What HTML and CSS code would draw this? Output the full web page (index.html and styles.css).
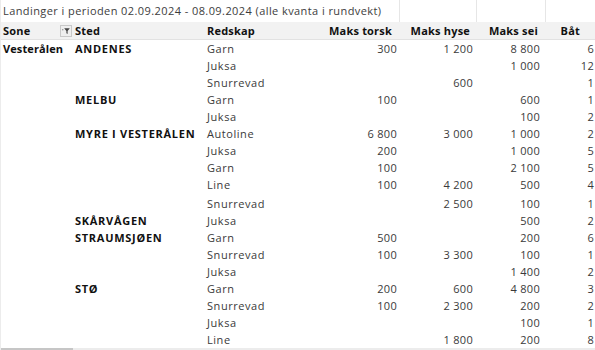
FILE: index.html
```html
<!DOCTYPE html>
<html>
<head>
<meta charset="utf-8">
<link rel="stylesheet" href="styles.css">
</head>
<body>
<div class="sheet">
<table class="grid">
<colgroup>
<col class="c-sone"><col class="c-sted"><col class="c-red"><col class="c-torsk"><col class="c-hyse"><col class="c-sei"><col class="c-bat">
</colgroup>
<tr class="title-row">
<td colspan="4" class="title">Landinger i perioden 02.09.2024 - 08.09.2024 (alle kvanta i rundvekt)</td>
<td class="gl"></td><td class="gl"></td><td class="gl"></td>
</tr>
<tr class="head">
<th class="h-sone"><div class="sone-head"><span>Sone</span><svg class="filter" width="12" height="12" viewBox="0 0 12 12"><rect x="0.5" y="0.5" width="11" height="11" fill="#efefef" stroke="#c9c9c9"/><path d="M4.2 3.2h5.6L7.6 5.9v3.2L6.4 8.3V5.9z" fill="#444"/><rect x="2.2" y="4.2" width="1.1" height="1.1" fill="#777"/></svg></div></th>
<th class="h-txt">Sted</th>
<th class="h-txt">Redskap</th>
<th class="h-num h-torsk">Maks torsk</th>
<th class="h-num h-hyse">Maks hyse</th>
<th class="h-num h-sei">Maks sei</th>
<th class="h-num h-bat">Båt</th>
</tr>
<tr><td class="b sone">Vesterålen</td><td class="b up">ANDENES</td><td>Garn</td><td class="n t">300</td><td class="n h">1&nbsp;200</td><td class="n s">8&nbsp;800</td><td class="n bt">6</td></tr>
<tr><td></td><td></td><td>Juksa</td><td class="n t"></td><td class="n h"></td><td class="n s">1&nbsp;000</td><td class="n bt">12</td></tr>
<tr><td></td><td></td><td>Snurrevad</td><td class="n t"></td><td class="n h">600</td><td class="n s"></td><td class="n bt">1</td></tr>
<tr><td></td><td class="b up">MELBU</td><td>Garn</td><td class="n t">100</td><td class="n h"></td><td class="n s">600</td><td class="n bt">1</td></tr>
<tr><td></td><td></td><td>Juksa</td><td class="n t"></td><td class="n h"></td><td class="n s">100</td><td class="n bt">2</td></tr>
<tr><td></td><td class="b up">MYRE I VESTERÅLEN</td><td>Autoline</td><td class="n t">6&nbsp;800</td><td class="n h">3&nbsp;000</td><td class="n s">1&nbsp;000</td><td class="n bt">2</td></tr>
<tr><td></td><td></td><td>Juksa</td><td class="n t">200</td><td class="n h"></td><td class="n s">1&nbsp;000</td><td class="n bt">5</td></tr>
<tr><td></td><td></td><td>Garn</td><td class="n t">100</td><td class="n h"></td><td class="n s">2&nbsp;100</td><td class="n bt">5</td></tr>
<tr class="tall"><td></td><td></td><td>Line</td><td class="n t">100</td><td class="n h">4&nbsp;200</td><td class="n s">500</td><td class="n bt">4</td></tr>
<tr><td></td><td></td><td>Snurrevad</td><td class="n t"></td><td class="n h">2&nbsp;500</td><td class="n s">100</td><td class="n bt">1</td></tr>
<tr><td></td><td class="b up">SKÅRVÅGEN</td><td>Juksa</td><td class="n t"></td><td class="n h"></td><td class="n s">500</td><td class="n bt">2</td></tr>
<tr><td></td><td class="b up">STRAUMSJØEN</td><td>Garn</td><td class="n t">500</td><td class="n h"></td><td class="n s">200</td><td class="n bt">6</td></tr>
<tr><td></td><td></td><td>Snurrevad</td><td class="n t">100</td><td class="n h">3&nbsp;300</td><td class="n s">100</td><td class="n bt">1</td></tr>
<tr><td></td><td></td><td>Juksa</td><td class="n t"></td><td class="n h"></td><td class="n s">1&nbsp;400</td><td class="n bt">2</td></tr>
<tr><td></td><td class="b up">STØ</td><td>Garn</td><td class="n t">200</td><td class="n h">600</td><td class="n s">4&nbsp;800</td><td class="n bt">3</td></tr>
<tr><td></td><td></td><td>Snurrevad</td><td class="n t">100</td><td class="n h">2&nbsp;300</td><td class="n s">200</td><td class="n bt">2</td></tr>
<tr><td></td><td></td><td>Juksa</td><td class="n t"></td><td class="n h"></td><td class="n s">100</td><td class="n bt">1</td></tr>
<tr><td></td><td></td><td>Line</td><td class="n t"></td><td class="n h">1&nbsp;800</td><td class="n s">200</td><td class="n bt">8</td></tr>
</table>
<div class="scrollbar"><div class="thumb"></div></div>
</div>
</body>
</html>
```
FILE: styles.css
```css
html, body {
  margin: 0;
  padding: 0;
  background: #ffffff;
}
.sheet {
  width: 595px;
  height: 350px;
  overflow: hidden;
  border-left: 1px solid #ececec;
  box-sizing: border-box;
  font-family: "Open Sans", "Liberation Sans", sans-serif;
  font-size: 11px;
  color: #3a3a3a;
}
.grid {
  border-collapse: collapse;
  table-layout: fixed;
  width: 594px;
}
.c-sone { width: 72px; }
.c-sted { width: 132px; }
.c-red { width: 120px; }
.c-torsk { width: 74px; }
.c-hyse { width: 77px; }
.c-sei { width: 69px; }
.c-bat { width: 50px; }
.grid td, .grid th {
  padding: 0 0 0 2px;
  height: 17px;
  line-height: 17px;
  white-space: nowrap;
  overflow: visible;
  letter-spacing: 0.55px;
}
.title-row td {
  height: 22px;
  line-height: 22px;
  padding-left: 2px;
  color: #3d3d3d;
  letter-spacing: 0.42px;
}
.title-row .gl {
  border-left: 1px solid #e6e6e6;
  border-right: 1px solid #e6e6e6;
}
.head th {
  background: #f2f2f2;
  height: 17px;
  line-height: 17px;
  font-weight: 700;
  color: #111;
  text-align: left;
  letter-spacing: 0.2px;
  border-bottom: 1px solid #e2e2e2;
}
.sone-head {
  display: flex;
  align-items: center;
  justify-content: space-between;
  padding-right: 1px;
}
.filter {
  display: block;
}
.head th.h-num {
  text-align: right;
}
.head th.h-torsk { padding-right: 7px; }
.head th.h-hyse { padding-right: 6px; }
.head th.h-sei { padding-right: 7px; }
.head th.h-bat { padding-right: 15px; }
.grid td.b {
  font-weight: 700;
  color: #111;
  letter-spacing: 0.1px;
}
.grid td.b.up {
  letter-spacing: 0.72px;
}
.grid td.sone {
  padding-left: 2px;
}
.grid td.n {
  text-align: right;
  letter-spacing: 0.3px;
}
.grid td.t { padding-right: 2px; }
.grid td.h { padding-right: 3px; }
.grid td.s { padding-right: 5px; }
.grid td.bt { padding-right: 1px; }
.grid tr.tall td {
  height: 19px;
  line-height: 17px;
  vertical-align: top;
}
.scrollbar {
  height: 2px;
  background: #ececec;
}
.thumb {
  width: 72px;
  height: 2px;
  background: #c6c6c6;
}
```
